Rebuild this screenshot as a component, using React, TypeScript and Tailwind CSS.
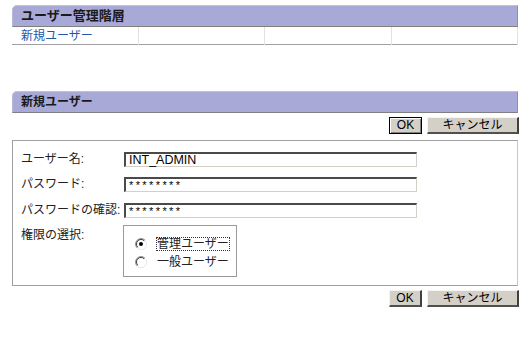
import React from "react";

const FONT = { fontFamily: '"Liberation Sans", "Noto Sans CJK JP", sans-serif' };

function Radio({ checked }: { checked?: boolean }) {
  return (
    <svg width="12" height="12" viewBox="0 0 12 12" className="shrink-0">
      <circle cx="6" cy="6" r="5.5" fill="#fff" />
      <path d="M10 2.2 A5.2 5.2 0 0 0 2.2 10" fill="none" stroke="#808080" strokeWidth="1" />
      <path d="M9.2 2.8 A4.3 4.3 0 0 0 2.8 9.2" fill="none" stroke="#404040" strokeWidth="1" />
      <path d="M10 2.2 A5.2 5.2 0 0 1 2.2 10" fill="none" stroke="#e8e8e8" strokeWidth="1" />
      {checked && <circle cx="6" cy="6" r="2" fill="#000" />}
    </svg>
  );
}

function Btn({ children, w, def }: { children: React.ReactNode; w: string; def?: boolean }) {
  return (
    <button
      className={
        "h-[17px] bg-[#d4d0c8] text-[12px] leading-[13px] text-black flex items-center justify-center " +
        w +
        (def
          ? " border border-[#000] shadow-[inset_1px_1px_0_#fff,inset_-1px_-1px_0_#808080]"
          : " border-t border-l border-t-[#f4f4f4] border-l-[#f4f4f4] border-r-2 border-b-2 border-r-[#404040] border-b-[#505050]")
      }
    >
      {children}
    </button>
  );
}

function Field({ value, small }: { value: string; small?: boolean }) {
  return (
    <div
      className={
        "w-[293px] h-[15px] bg-white border-t-2 border-l-2 border-t-[#4a4a4a] border-l-[#4a4a4a] border-r border-b border-r-[#d4d0c8] border-b-[#d4d0c8] pl-[3px] flex items-center text-black " +
        (small ? "text-[11px] tracking-[2.4px]" : "text-[12.5px]")
      }
    >
      {value}
    </div>
  );
}

export default function App() {
  return (
    <div className="w-[532px] h-[342px] bg-white pt-[5px] pl-[12px] text-[#222]" style={FONT}>
      <div className="w-[506px]">
        <div className="h-[22px] bg-[#a9a9d7] rounded-tl-[5px] border-t border-t-[#c4c4c4] border-l border-l-[#b8b8d8] border-b border-b-[#808080] border-r border-r-[#9090a8] flex items-center pl-[8px] text-[13px] font-bold text-[#1a1a1a]">
          ユーザー管理階層
        </div>
        <div className="grid grid-cols-4 h-[18px] border-b border-b-[#a0a0a0] text-[12px]">
          <div className="border-r border-r-[#e2e2e2] pl-[9px] flex items-center text-[#2456a8]">新規ユーザー</div>
          <div className="border-r border-r-[#e2e2e2]" />
          <div className="border-r border-r-[#e2e2e2]" />
          <div className="border-r border-r-[#e2e2e2]" />
        </div>

        <div className="mt-[46px] h-[22px] bg-[#a9a9d7] rounded-tl-[5px] border-t border-t-[#c4c4c4] border-l border-l-[#b8b8d8] border-b border-b-[#808080] border-r border-r-[#9090a8] flex items-center pl-[8px] text-[12px] font-bold text-[#1a1a1a]">
          新規ユーザー
        </div>

        <div className="mt-[4px] flex justify-end gap-[5px] -mr-[1px]">
          <Btn w="w-[33px]" def>OK</Btn>
          <Btn w="w-[92px]">キャンセル</Btn>
        </div>

        <div className="mt-[6px] h-[146px] border border-[#a0a0a0] border-r-[#c8c8c8] pl-[8px] pt-[11px] text-[12px] text-[#222]">
          <div className="flex items-start h-[15px]">
            <div className="w-[103px] leading-[15px]">ユーザー名:</div>
            <Field value="INT_ADMIN" />
          </div>
          <div className="flex items-start h-[15px] mt-[10px]">
            <div className="w-[103px] leading-[15px]">パスワード:</div>
            <Field value="********" small />
          </div>
          <div className="flex items-start h-[15px] mt-[11px]">
            <div className="w-[103px] leading-[15px]">パスワードの確認:</div>
            <Field value="********" small />
          </div>
          <div className="flex items-start mt-[7px]">
            <div className="w-[102px] leading-[15px] mt-[3px]">権限の選択:</div>
            <div className="w-[114px] h-[52px] border border-[#9a9a9a] pl-[11px] pt-[11px] flex flex-col gap-[4px]">
              <div className="flex items-center gap-[9px] h-[14px]">
                <Radio checked />
                <span className="border border-dotted border-[#333] leading-[12px]">管理ユーザー</span>
              </div>
              <div className="flex items-center gap-[9px] h-[14px]">
                <Radio />
                <span className="leading-[12px] pl-[1px]">一般ユーザー</span>
              </div>
            </div>
          </div>
        </div>

        <div className="mt-[4px] flex justify-end gap-[5px] -mr-[1px]">
          <Btn w="w-[33px]">OK</Btn>
          <Btn w="w-[92px]">キャンセル</Btn>
        </div>
      </div>
    </div>
  );
}
